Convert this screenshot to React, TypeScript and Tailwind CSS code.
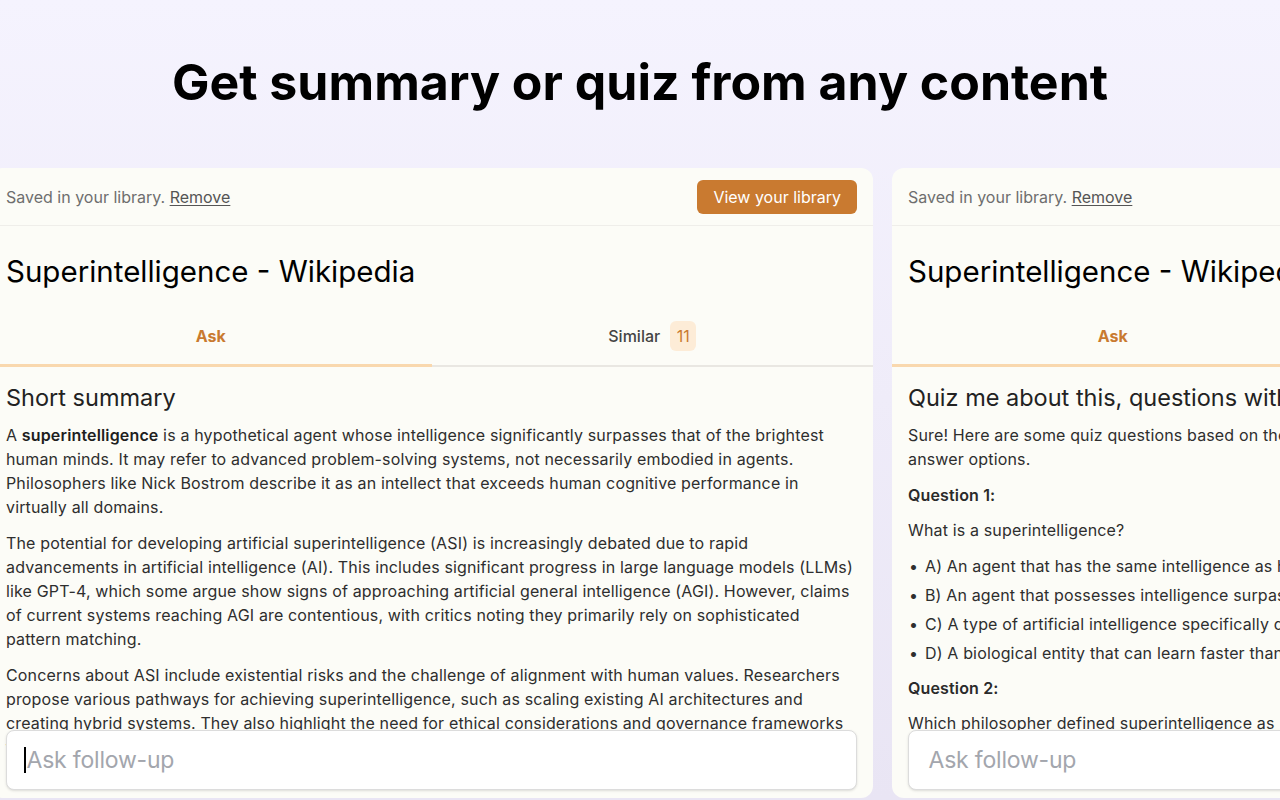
import React from "react";

const font = { fontFamily: "Inter, 'Noto Sans', sans-serif" };

type CardProps = {
  children: React.ReactNode;
  caret?: boolean;
};

const Header = () => (
  <div className="flex items-center justify-between h-[58px] px-4 border-b border-[#efeeea]">
    <div className="text-base text-[#6e6e6e]">
      Saved in your library.{" "}
      <span className="underline underline-offset-2 text-[#555]">Remove</span>
    </div>
    <button className="h-[34px] px-4 rounded-md bg-[#c97a30] text-white text-base">
      View your library
    </button>
  </div>
);

const Tabs = () => (
  <div className="flex h-[60px]">
    <div className="flex-1 flex items-center justify-center border-b-[3px] border-[#f9d8ae] text-[#c97a30] font-bold text-base">
      Ask
    </div>
    <div className="flex-1 flex items-center justify-center gap-[10px] border-b-2 border-[#e9e7e2] text-[#444] font-medium text-base">
      Similar
      <span className="h-[30px] w-[26px] rounded-md bg-[#fdecd7] text-[#c97a30] flex items-center justify-center font-normal">
        11
      </span>
    </div>
  </div>
);

const FollowUp = ({ caret }: { caret?: boolean }) => (
  <div className="absolute left-4 right-4 bottom-[8px] h-[60px] rounded-lg bg-white border border-[#dcdcdc] shadow-sm flex items-center pl-[17px]">
    <div className="flex items-center">
      <span className={`w-[1.5px] h-[26px] mr-[1px] ${caret ? "bg-black" : "bg-transparent"}`} />
      <span className="text-[23px] text-[#a3a6ad] tracking-[-0.2px]">Ask follow-up</span>
    </div>
  </div>
);

const Card = ({ children, caret }: CardProps) => (
  <div className="relative shrink-0 w-[883px] h-[630px] rounded-xl bg-[#fcfcf7] overflow-hidden">
    <Header />
    <div className="px-4 pt-[27px] pb-[18px] text-[29.5px] leading-9 text-black whitespace-nowrap">
      Superintelligence - Wikipedia
    </div>
    <Tabs />
    <div className="px-4 pt-[15px] text-base leading-6 text-[#2e2e2e] tracking-[0.15px]">{children}</div>
    <FollowUp caret={caret} />
  </div>
);

export default function App() {
  return (
    <div
      style={font}
      className="w-[1280px] h-[800px] overflow-hidden bg-gradient-to-b from-[#f5f3fe] to-[#e9e5f4]"
    >
      <h1 className="pt-[56px] h-[168px] text-center text-[50px] leading-[52px] font-bold text-black">
        Get summary or quiz from any content
      </h1>
      <div className="flex gap-[19px] ml-[-10px]">
        <Card caret>
          <h2 className="text-[23.5px] leading-8 text-[#222] mb-[9px] tracking-normal">Short summary</h2>
          <p className="mb-3">
            A <b className="text-[#1e1e1e] font-semibold">superintelligence</b> is a hypothetical agent whose
            intelligence significantly surpasses that of the brightest human minds. It may refer to advanced
            problem-solving systems, not necessarily embodied in agents. Philosophers like Nick Bostrom describe it
            as an intellect that exceeds human cognitive performance in virtually all domains.
          </p>
          <p className="mb-3">
            The potential for developing artificial superintelligence (ASI) is increasingly debated due to rapid
            advancements in artificial intelligence (AI). This includes significant progress in large language
            models (LLMs) like GPT-4, which some argue show signs of approaching artificial general intelligence
            (AGI). However, claims of current systems reaching AGI are contentious, with critics noting they
            primarily rely on sophisticated pattern matching.
          </p>
          <p className="mb-3">
            Concerns about ASI include existential risks and the challenge of alignment with human values.
            Researchers propose various pathways for achieving superintelligence, such as scaling existing AI
            architectures and creating hybrid systems. They also highlight the need for ethical considerations and
            governance frameworks to guide development, ensuring that the benefits of such systems are broadly shared
            and that potential harms are carefully anticipated and mitigated by developers and policymakers alike.
          </p>
        </Card>
        <Card>
          <h2 className="text-[23.5px] leading-8 text-[#222] mb-[9px] whitespace-nowrap tracking-normal">
            Quiz me about this, questions with answer options
          </h2>
          <p className="mb-3">
            Sure! Here are some quiz questions based on the content about superintelligence, with multiple-choice
            <br />
            answer options.
          </p>
          <p className="mb-[11px] font-semibold text-[#2a2a2a]">Question 1:</p>
          <p className="mb-3">What is a superintelligence?</p>
          <ul className="mb-[11px] whitespace-nowrap">
            {[
              "A) An agent that has the same intelligence as humans",
              "B) An agent that possesses intelligence surpassing the brightest human minds",
              "C) A type of artificial intelligence specifically designed for problem-solving",
              "D) A biological entity that can learn faster than humans",
            ].map((t) => (
              <li key={t} className="flex mb-[5px]">
                <span className="w-[17px] pl-[1px]">•</span>
                {t}
              </li>
            ))}
          </ul>
          <p className="mb-[11px] font-semibold text-[#2a2a2a]">Question 2:</p>
          <p className="whitespace-nowrap">
            Which philosopher defined superintelligence as "any intellect that greatly exceeds the cognitive
            performance of humans"?
          </p>
        </Card>
      </div>
    </div>
  );
}
